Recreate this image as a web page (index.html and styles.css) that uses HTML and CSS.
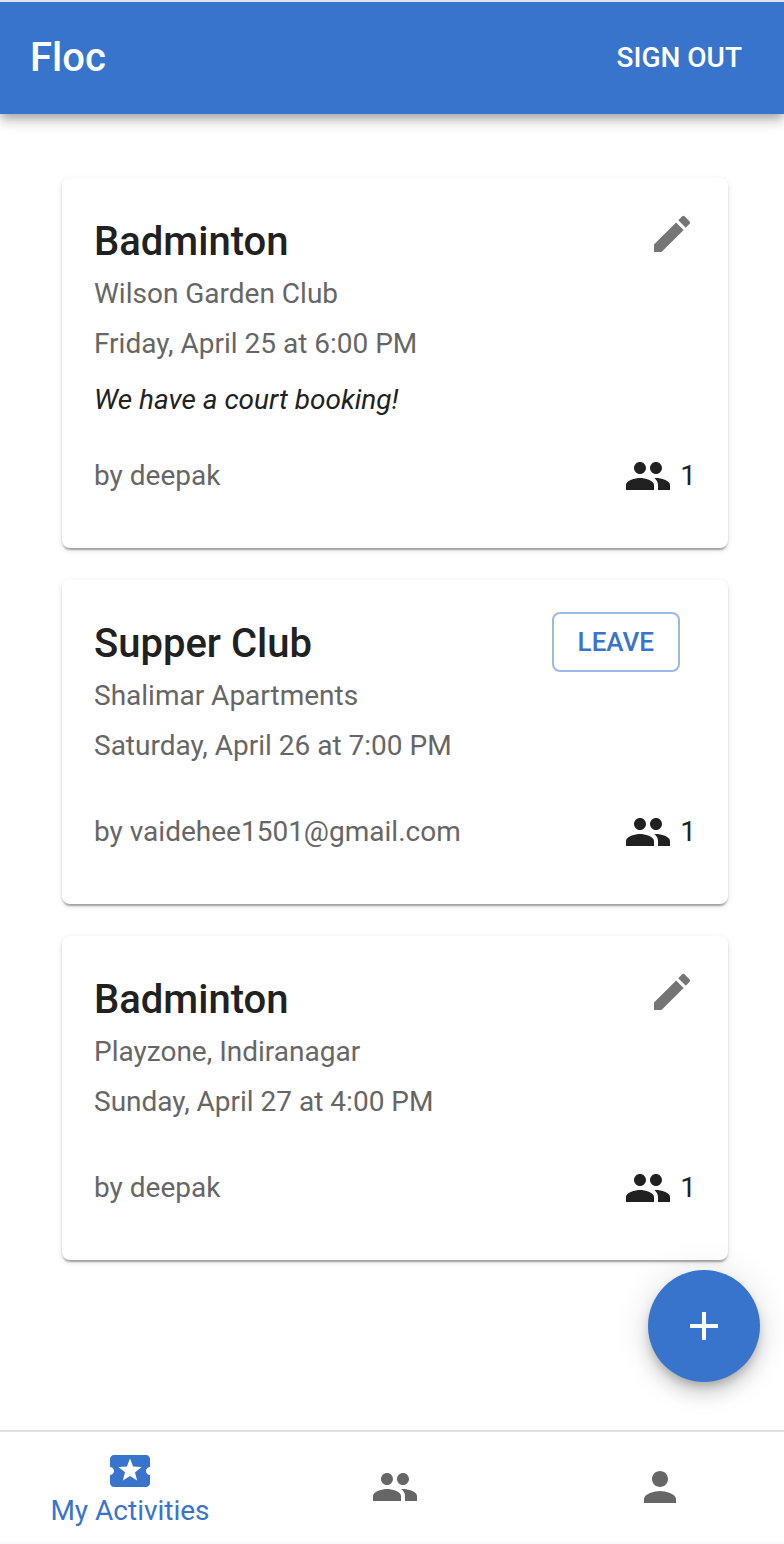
FILE: index.html
```html
<!DOCTYPE html>
<html lang="en">
<head>
<meta charset="utf-8">
<meta name="viewport" content="width=device-width, initial-scale=1">
<title>Floc</title>
<link rel="stylesheet" href="styles.css">
</head>
<body>
<svg class="sprite" aria-hidden="true">
  <symbol id="edit" viewBox="0 0 24 24"><path d="M3 17.25V21h3.75L17.81 9.94l-3.75-3.75zM20.71 7.04c.39-.39.39-1.02 0-1.41l-2.34-2.34a.9959.9959 0 0 0-1.41 0l-1.83 1.83 3.75 3.75z"/></symbol>
  <symbol id="people" viewBox="0 0 24 24"><path d="M16 11c1.66 0 2.99-1.34 2.99-3S17.66 5 16 5s-3 1.34-3 3 1.34 3 3 3m-8 0c1.66 0 2.99-1.34 2.99-3S9.66 5 8 5 5 6.34 5 8s1.34 3 3 3m0 2c-2.33 0-7 1.17-7 3.5V19h14v-2.5c0-2.33-4.67-3.5-7-3.5m8 0c-.29 0-.62.02-.97.05 1.16.84 1.97 1.97 1.97 3.45V19h6v-2.5c0-2.33-4.67-3.5-7-3.5"/></symbol>
  <symbol id="person" viewBox="0 0 24 24"><path d="M12 12c2.21 0 4-1.79 4-4s-1.79-4-4-4-4 1.79-4 4 1.79 4 4 4m0 2c-2.67 0-8 1.34-8 4v2h16v-2c0-2.66-5.33-4-8-4"/></symbol>
  <symbol id="ticket" viewBox="0 0 24 24"><path d="M20 12c0-1.1.9-2 2-2V6c0-1.1-.9-2-2-2H4c-1.1 0-1.99.9-1.99 2v4c1.1 0 1.99.9 1.99 2s-.89 2-2 2v4c0 1.1.9 2 2 2h16c1.1 0 2-.9 2-2v-4c-1.1 0-2-.9-2-2m-4.42 4.8L12 14.5l-3.58 2.3 1.08-4.12-3.29-2.69 4.24-.25L12 5.8l1.54 3.95 4.24.25-3.29 2.69z"/></symbol>
  <symbol id="plus" viewBox="0 0 24 24"><path d="M19 13h-6v6h-2v-6H5v-2h6V5h2v6h6z"/></symbol>
</svg>

<header class="app-bar">
  <h1 class="app-bar__brand">Floc</h1>
  <button class="app-bar__action" type="button">SIGN OUT</button>
</header>

<main class="activities">
  <article class="card">
    <div class="card__head">
      <h2 class="card__title">Badminton</h2>
      <button class="icon-button" type="button" aria-label="Edit"><svg class="icon"><use href="#edit"/></svg></button>
    </div>
    <p class="card__place">Wilson Garden Club</p>
    <p class="card__time">Friday, April 25 at 6:00 PM</p>
    <p class="card__note">We have a court booking!</p>
    <footer class="card__foot">
      <span class="card__host">by deepak</span>
      <span class="card__count"><svg class="icon"><use href="#people"/></svg>1</span>
    </footer>
  </article>

  <article class="card">
    <div class="card__head">
      <h2 class="card__title">Supper Club</h2>
      <button class="leave-button" type="button">LEAVE</button>
    </div>
    <p class="card__place">Shalimar Apartments</p>
    <p class="card__time">Saturday, April 26 at 7:00 PM</p>
    <footer class="card__foot">
      <span class="card__host">by vaidehee1501@gmail.com</span>
      <span class="card__count"><svg class="icon"><use href="#people"/></svg>1</span>
    </footer>
  </article>

  <article class="card">
    <div class="card__head">
      <h2 class="card__title">Badminton</h2>
      <button class="icon-button" type="button" aria-label="Edit"><svg class="icon"><use href="#edit"/></svg></button>
    </div>
    <p class="card__place">Playzone, Indiranagar</p>
    <p class="card__time">Sunday, April 27 at 4:00 PM</p>
    <footer class="card__foot">
      <span class="card__host">by deepak</span>
      <span class="card__count"><svg class="icon"><use href="#people"/></svg>1</span>
    </footer>
  </article>
</main>

<button class="fab" type="button" aria-label="Add activity"><svg class="icon"><use href="#plus"/></svg></button>

<nav class="tabs">
  <button class="tab tab--current" type="button"><svg class="icon"><use href="#ticket"/></svg>My Activities</button>
  <button class="tab" type="button" aria-label="Groups"><svg class="icon"><use href="#people"/></svg></button>
  <button class="tab" type="button" aria-label="Profile"><svg class="icon"><use href="#person"/></svg></button>
</nav>
</body>
</html>
```

FILE: styles.css
```css
:root {
  --primary: #3874cb;
  --ink: #212121;
  --muted: #666;
}

* {
  box-sizing: border-box;
}

body {
  margin: 0;
  min-height: 100vh;
  display: flex;
  flex-direction: column;
  background: #fff;
  color: var(--ink);
  font-family: Roboto, sans-serif;
  font-size: 28px;
  line-height: 40px;
}

h1,
h2,
p {
  margin: 0;
}

button {
  margin: 0;
  padding: 0;
  border: 0;
  background: none;
  color: inherit;
  font: inherit;
  cursor: pointer;
}

.sprite {
  position: absolute;
  width: 0;
  height: 0;
}

.icon {
  display: block;
  flex: none;
  width: 48px;
  height: 48px;
  fill: currentColor;
}

.app-bar {
  display: flex;
  align-items: center;
  justify-content: space-between;
  min-height: 114px;
  padding: 0 42px 0 30px;
  border-top: 2px solid #dde4ef;
  background: var(--primary);
  color: #fff;
  box-shadow: 0 4px 8px -2px rgba(0, 0, 0, .2), 0 8px 10px rgba(0, 0, 0, .14), 0 2px 20px rgba(0, 0, 0, .12);
}

.app-bar__brand {
  font-size: 40px;
  font-weight: 500;
  line-height: 64px;
}

.app-bar__action {
  font-weight: 500;
}

.activities {
  flex: 1;
  display: flex;
  flex-direction: column;
  gap: 32px;
  padding: 64px 56px 32px 62px;
}

.card {
  padding: 32px 32px 48px;
  border-radius: 8px;
  background: #fff;
  box-shadow: 0 4px 2px -2px rgba(0, 0, 0, .2), 0 2px 2px rgba(0, 0, 0, .14), 0 2px 6px rgba(0, 0, 0, .12);
}

.card__head {
  display: flex;
  align-items: flex-start;
  justify-content: space-between;
}

.card__title {
  font-size: 40px;
  font-weight: 500;
  line-height: 64px;
}

.card__place,
.card__time,
.card__host {
  color: var(--muted);
}

.card__time {
  margin-top: 10px;
}

.card__note {
  margin-top: 16px;
  font-style: italic;
}

.card__foot {
  display: flex;
  align-items: center;
  justify-content: space-between;
  margin-top: 42px;
}

.card__note + .card__foot {
  margin-top: 32px;
}

.card__count {
  display: flex;
  align-items: center;
  gap: 8px;
}

.icon-button {
  color: #757575;
}

.leave-button {
  margin-right: 16px;
  padding: 8px 24px;
  border: 2px solid #9bb9e5;
  border-radius: 8px;
  color: var(--primary);
  font-size: 26px;
  font-weight: 500;
}

.fab {
  position: fixed;
  right: 24px;
  bottom: 162px;
  display: grid;
  place-items: center;
  width: 112px;
  height: 112px;
  border-radius: 50%;
  background: var(--primary);
  color: #fff;
  box-shadow: 0 6px 10px -2px rgba(0, 0, 0, .2), 0 12px 20px rgba(0, 0, 0, .14), 0 2px 36px rgba(0, 0, 0, .12);
}

.tabs {
  position: sticky;
  bottom: 0;
  display: flex;
  justify-content: space-between;
  min-height: 114px;
  padding: 0 44px 0 50px;
  border-top: 2px solid #e0e0e0;
  border-bottom: 2px solid #f8f8fd;
  background: #fff;
}

.tab {
  display: flex;
  flex-direction: column;
  align-items: center;
  justify-content: center;
  width: 160px;
  color: var(--muted);
  line-height: 32px;
  white-space: nowrap;
}

.tab--current {
  color: var(--primary);
}
```
